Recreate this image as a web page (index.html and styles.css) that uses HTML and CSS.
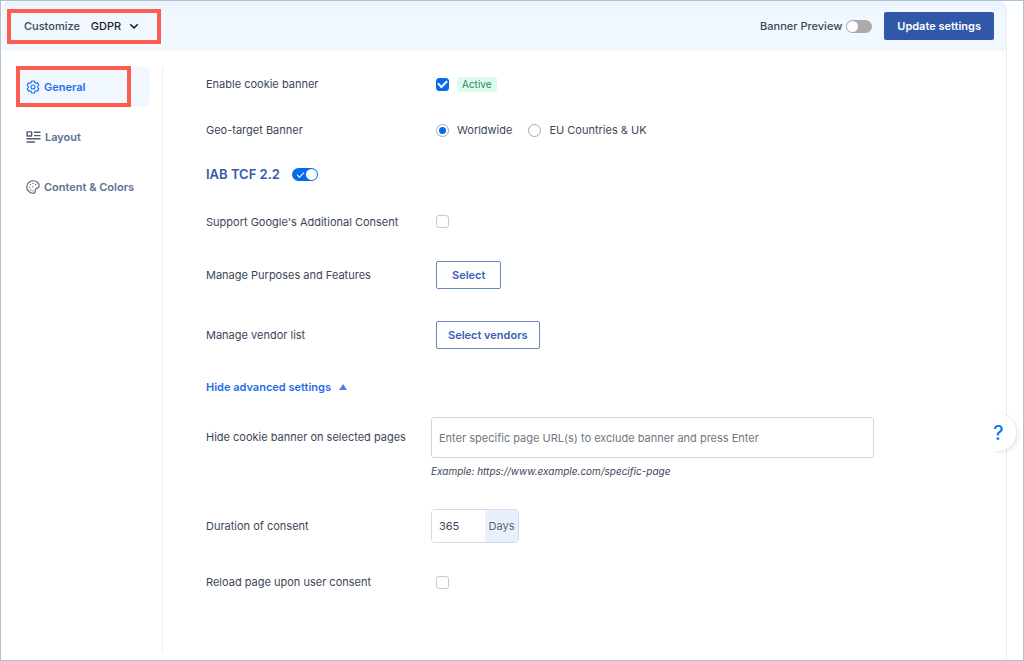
FILE: index.html
```html
<!DOCTYPE html>
<html lang="en">
<head>
<meta charset="utf-8">
<meta name="viewport" content="width=device-width, initial-scale=1">
<title>Customize banner</title>
<link rel="stylesheet" href="styles.css">
</head>
<body>
<div class="frame">
  <div class="panel">
    <header class="topbar">
      <div class="law-picker">
        <label class="law-label" for="law">Customize</label>
        <select class="law-select" id="law"><option>GDPR</option><option>CCPA</option></select>
        <svg class="chevron" viewBox="0 0 10 10" aria-hidden="true"><path d="M1.2 3.2 5 6.9 8.8 3.2"/></svg>
      </div>
      <div class="topbar-actions">
        <label class="preview-label" for="preview">Banner Preview</label>
        <input class="switch" type="checkbox" role="switch" id="preview">
        <button class="btn-primary" type="button">Update settings</button>
      </div>
    </header>

    <div class="body">
      <nav class="sidenav">
        <a class="nav-item active" href="#general">
          <svg class="nav-icon" viewBox="0 0 14 14" aria-hidden="true"><path d="M5.7 1h2.600l.45 1.550 1.200.7 1.550-.4 1.300 2.250L11.700 6.300v1.400l1.100 1.200-1.300 2.250-1.550-.4-1.200.7L8.300 13H5.700l-.45-1.550-1.200-.7-1.550.4L1.200 8.900l1.100-1.200V6.300L1.200 5.100l1.300-2.250 1.550.4 1.200-.7z"/><circle cx="7" cy="7" r="2"/></svg>
          General
        </a>
        <a class="nav-item" href="#layout">
          <svg class="nav-icon wide" viewBox="0 0 16 14" aria-hidden="true"><path d="M1.200 1.500h4.800v4.500H1.200zM8.500 2H15.500M8.500 5.500H15.500M.5 8.900H15.500M.5 12.300h9"/></svg>
          Layout
        </a>
        <a class="nav-item" href="#content">
          <svg class="nav-icon" viewBox="0 0 14 14" aria-hidden="true"><path d="M7 .8C3.400.8.8 3.500.8 7s2.700 6.300 6 6.300c1.700 0 2.500-.8 2.400-1.900-.1-1.500-.3-2.500 1-2.900 1.500-.4 3-.6 3-2.500C13.200 3 10.500.8 7 .8z"/><path class="dots" d="M7 3.500h0M4.400 4.700h0M9.700 4.500h0M3.600 7.300h0M6.800 6.600h0M4.700 10h0M7 10.800h0"/></svg>
          Content &amp; Colors
        </a>
      </nav>

      <form class="settings">
        <div class="row">
          <label for="enable">Enable cookie banner</label>
          <div class="control">
            <input class="check" type="checkbox" id="enable" checked>
            <span class="badge">Active</span>
          </div>
        </div>
        <div class="row" role="radiogroup" aria-labelledby="geo">
          <span id="geo">Geo-target Banner</span>
          <div class="control">
            <input class="radio" type="radio" name="geo" id="world" checked>
            <label for="world">Worldwide</label>
            <input class="radio second" type="radio" name="geo" id="eu">
            <label for="eu">EU Countries &amp; UK</label>
          </div>
        </div>
        <div class="section">
          <label class="section-title" for="iab">IAB TCF 2.2</label>
          <input class="switch" type="checkbox" role="switch" id="iab" checked>
        </div>
        <div class="row medium">
          <label for="gac">Support Google's Additional Consent</label>
          <div class="control"><input class="check" type="checkbox" id="gac"></div>
        </div>
        <div class="row medium">
          <span>Manage Purposes and Features</span>
          <div class="control"><button class="btn-outline narrow" type="button">Select</button></div>
        </div>
        <div class="row tall">
          <span>Manage vendor list</span>
          <div class="control"><button class="btn-outline" type="button">Select vendors</button></div>
        </div>
        <button class="advanced" type="button">Hide advanced settings
          <svg class="caret" viewBox="0 0 8 6" aria-hidden="true"><path d="M4 0l4 6H0z"/></svg>
        </button>
        <div class="row pages">
          <label for="pages">Hide cookie banner on selected pages</label>
          <div class="field">
            <input class="text-input" type="text" id="pages" placeholder="Enter specific page URL(s) to exclude banner and press Enter">
            <em class="hint">Example: https://www.example.com/specific-page</em>
          </div>
        </div>
        <div class="row tall">
          <label for="days">Duration of consent</label>
          <div class="duration">
            <input class="days-input" type="text" inputmode="numeric" id="days" value="365">
            <span class="unit">Days</span>
          </div>
        </div>
        <div class="row short">
          <label for="reload">Reload page upon user consent</label>
          <div class="control"><input class="check" type="checkbox" id="reload"></div>
        </div>
      </form>
    </div>
  </div>
  <button class="help" type="button" aria-label="Help"><span>?</span></button>
</div>
</body>
</html>
```
FILE: styles.css
```css
* { box-sizing: border-box; }

body {
  margin: 0;
  background: #fff;
  color: #3b4658;
  font: 11px/16px Inter, "Liberation Sans", sans-serif;
}

button, input, select { margin: 0; font: inherit; color: inherit; }

.frame {
  position: relative;
  display: flex;
  min-height: 100vh;
  padding: 0 16px 0 1px;
  border: 1px solid #a9c3d0;
}

.panel {
  flex: 1;
  display: flex;
  flex-direction: column;
  border-right: 1px solid #ebedf0;
  border-radius: 8px 8px 0 0;
  overflow: hidden;
}

.topbar {
  display: flex;
  align-items: center;
  justify-content: space-between;
  height: 50px;
  padding: 0 12px 0 5px;
  background: linear-gradient(#e9f2fb, #f0f7fe 10px);
}

.law-picker {
  display: flex;
  align-items: center;
  width: 154px;
  height: 35px;
  padding-left: 13px;
  border: 4px solid #fd5c50;
}

.law-label { font-weight: 500; }

.law-select {
  appearance: none;
  width: 48px;
  margin-left: 11px;
  padding: 0;
  border: 0;
  background: none;
  color: #1d2127;
  font-weight: 500;
}

.chevron {
  width: 10px;
  height: 10px;
  margin-left: -10px;
  fill: none;
  stroke: #1d2127;
  stroke-width: 1.5;
  pointer-events: none;
}

.topbar-actions { display: flex; align-items: center; }

.preview-label { margin-right: 4px; font-weight: 500; }

.switch {
  appearance: none;
  display: flex;
  align-items: center;
  width: 26px;
  height: 13px;
  padding: 0 1px;
  border-radius: 8px;
  background: #ababab;
}

.switch::before {
  content: "";
  width: 11px;
  height: 11px;
  border-radius: 50%;
  background: #fff;
}

.switch:checked {
  justify-content: space-between;
  flex-direction: row-reverse;
  background: #066aec;
}

.switch:checked::after {
  content: "";
  width: 6px;
  height: 3px;
  margin-left: 4px;
  border: solid #fff;
  border-width: 0 0 1px 1px;
  transform: rotate(-45deg);
}

.btn-primary {
  height: 28px;
  margin-left: 12px;
  padding: 0 13px;
  border: 0;
  border-radius: 2px;
  background: #3157a8;
  color: #fff;
  font-weight: 600;
}

.body { flex: 1; display: flex; }

.sidenav {
  display: flex;
  flex-direction: column;
  gap: 10px;
  width: 161px;
  margin: 16px 0 8px;
  padding: 0 12px 0 14px;
  border-right: 1px solid #eeeff1;
}

.nav-item {
  position: relative;
  display: flex;
  align-items: center;
  gap: 4px;
  height: 40px;
  padding-left: 10px;
  border-radius: 6px;
  color: #5a7193;
  font-weight: 600;
  text-decoration: none;
}

.nav-item.active { background: #f0f7fe; color: #1a70e8; }

.nav-item.active::after {
  content: "";
  position: absolute;
  inset: -1px 19px 0 0;
  border: 4px solid #fd5c50;
}

.nav-icon {
  width: 14px;
  height: 14px;
  fill: none;
  stroke: #545d6a;
  stroke-width: 1.1;
  stroke-linejoin: round;
}

.active .nav-icon { stroke: #1a70e8; }
.nav-icon.wide { width: 15px; stroke-width: 1.5; }
.dots { stroke-width: 1.3; stroke-linecap: round; }

.settings {
  flex: 1;
  padding: 10px 132px 32px 43px;
}

.row {
  display: grid;
  grid-template-columns: 225px 1fr;
  align-items: center;
  min-height: 46px;
}

.row.medium { min-height: 53px; }
.row.tall { min-height: 68px; }
.row.short { min-height: 44px; }

.control { display: flex; align-items: center; padding-left: 5px; }

.check {
  appearance: none;
  display: grid;
  place-items: center;
  width: 13px;
  height: 13px;
  border: 1px solid #c8cacd;
  border-radius: 3px;
  background: #fff;
}

.check:checked { border-color: #066aec; background: #066aec; }

.check:checked::after {
  content: "";
  width: 7px;
  height: 4px;
  margin-bottom: 2px;
  border: solid #fff;
  border-width: 0 0 2px 2px;
  transform: rotate(-45deg);
}

.badge {
  margin-left: 8px;
  padding: 0 5px;
  border-radius: 2px;
  background: #dcfced;
  color: #36835c;
  font-size: 10px;
  line-height: 15px;
}

.radio {
  appearance: none;
  display: grid;
  place-items: center;
  width: 13px;
  height: 13px;
  margin-right: 8px;
  border: 1px solid #a5a8ac;
  border-radius: 50%;
}

.radio.second { margin-left: 16px; }

.radio:checked::after {
  content: "";
  width: 7px;
  height: 7px;
  border-radius: 50%;
  background: #066aec;
}

.section {
  display: flex;
  align-items: center;
  gap: 12px;
  height: 42px;
}

.section-title { color: #3459ad; font-size: 13px; font-weight: 600; }

.btn-outline {
  height: 28px;
  padding: 0 11px;
  border: 1px solid #6686c6;
  border-radius: 2px;
  background: #fff;
  color: #3b60b3;
  font-weight: 600;
}

.btn-outline.narrow { padding: 0 15px; }

.advanced {
  display: flex;
  align-items: center;
  gap: 8px;
  height: 36px;
  padding: 0;
  border: 0;
  background: none;
  color: #1f6ee6;
  font-weight: 600;
}

.caret { width: 8px; height: 6px; fill: #4b82e0; }

.row.pages { align-items: start; padding: 12px 0 14px; }
.pages > label { line-height: 40px; }

.field { display: flex; flex-direction: column; gap: 6px; }

.text-input {
  width: 100%;
  height: 41px;
  padding: 0 7px;
  border: 1px solid #d5d7da;
  border-radius: 3px;
}

.text-input::placeholder { color: #70767f; opacity: 1; }

.hint { font-size: 10px; line-height: 14px; }

.duration {
  display: flex;
  width: 88px;
  height: 34px;
  border: 1px solid #d5d9e2;
  border-radius: 4px;
  overflow: hidden;
}

.days-input {
  flex: 1;
  min-width: 0;
  padding: 0 7px;
  border: 0;
}

.unit {
  display: grid;
  place-items: center;
  width: 33px;
  background: #e9effd;
  color: #5d6675;
}

.help {
  position: absolute;
  top: 413px;
  right: 7px;
  width: 23px;
  height: 37px;
  padding: 0;
  border: 0;
  border-radius: 0 18px 18px 0;
  background: #fff;
  box-shadow: 2px 1px 4px rgba(0, 0, 0, 0.1);
  color: #0b78f5;
  font-size: 20px;
  font-weight: 500;
  text-align: left;
  clip-path: inset(-6px -6px -6px 0);
}
```
